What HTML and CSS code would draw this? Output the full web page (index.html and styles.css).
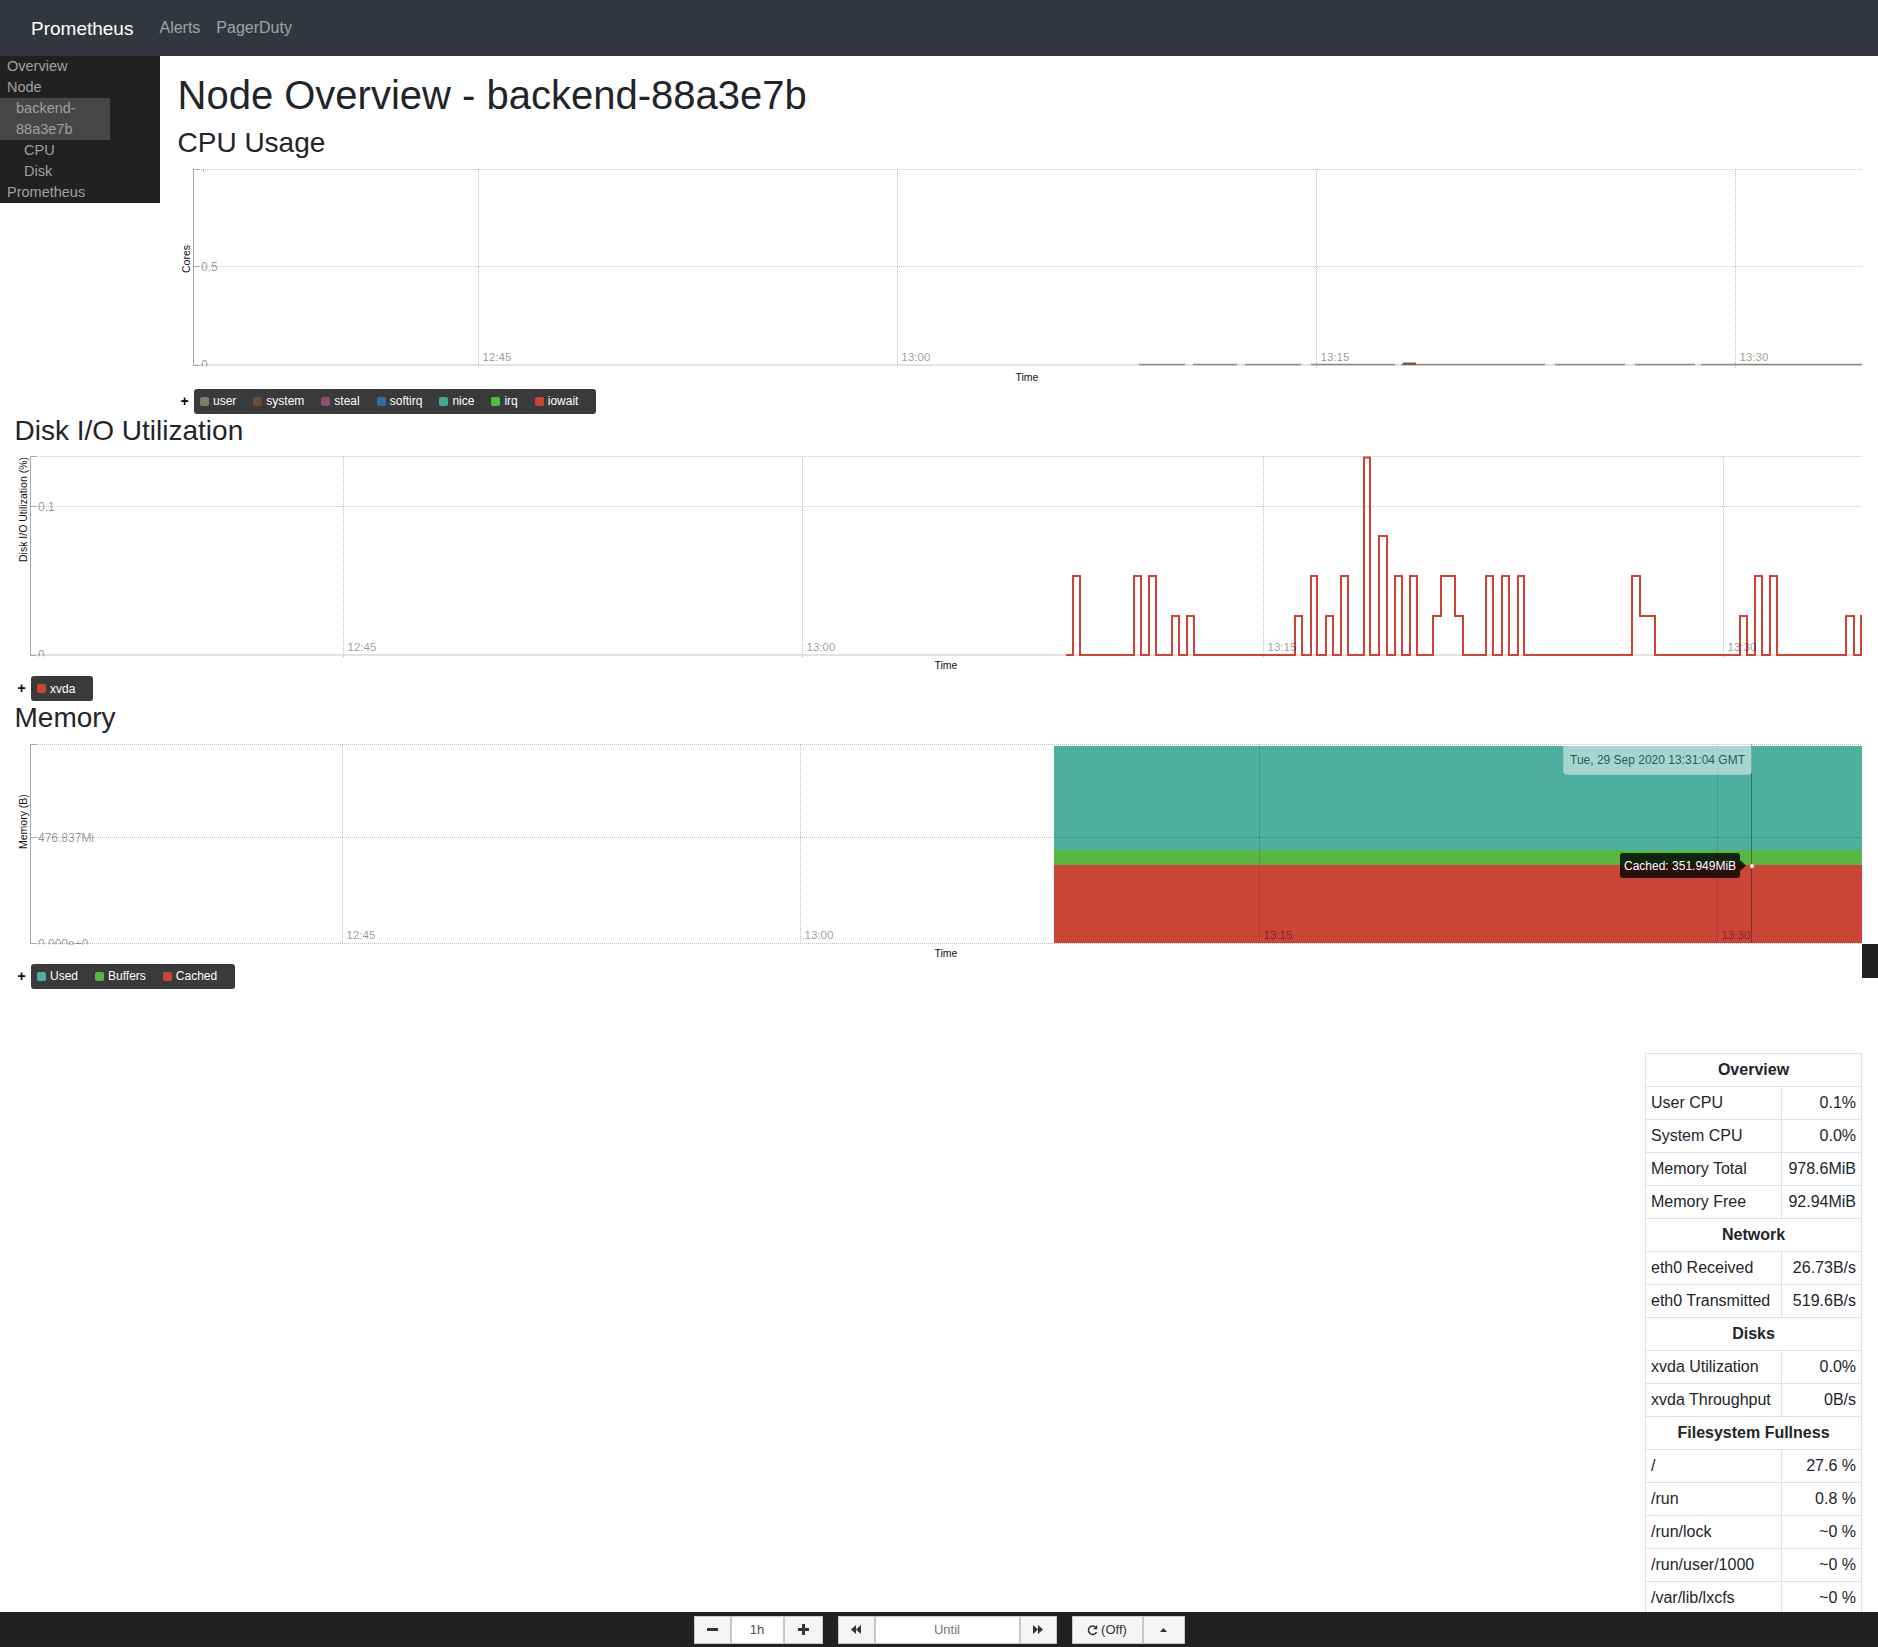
FILE: index.html
```html
<!DOCTYPE html>
<html lang="en">
<head>
<meta charset="utf-8">
<title>Node Overview - backend-88a3e7b</title>
<link rel="stylesheet" href="styles.css">
</head>
<body>
<nav class="navbar">
  <a class="brand">Prometheus</a>
  <a class="navlink">Alerts</a>
  <a class="navlink">PagerDuty</a>
</nav>

<div class="page">
  <div class="top">
    <aside class="sidebar">
      <a class="m1">Overview</a>
      <a class="m1">Node</a>
      <a class="m2">backend-88a3e7b</a>
      <a class="m3">CPU</a>
      <a class="m3">Disk</a>
      <a class="m1">Prometheus</a>
    </aside>
    <div class="content">
      <h1 class="title">Node Overview - backend-88a3e7b</h1>
      <h3 class="section">CPU Usage</h3>
      <div class="graph">
        <svg class="chart" width="1687" height="220" viewBox="0 0 1687 220">
          <defs><clipPath id="c1"><rect x="0" y="0" width="1687" height="197.5"/></clipPath></defs>
          <line class="grid" x1="18" y1="0.5" x2="1687" y2="0.5"/>
          <line class="grid" x1="18" y1="97.5" x2="1687" y2="97.5"/>
          <line class="base" x1="18" y1="196" x2="1687" y2="196"/>
          <line class="vgrid" x1="303.5" y1="0" x2="303.5" y2="199"/>
          <line class="vgrid" x1="722.5" y1="0" x2="722.5" y2="199"/>
          <line class="vgrid" x1="1141.5" y1="0" x2="1141.5" y2="199"/>
          <line class="vgrid" x1="1560.5" y1="0" x2="1560.5" y2="199"/>
          <path class="cpuline" d="M964 195.5 H1010 M1018 195.5 H1062 M1070 195.5 H1126 M1136 195.5 H1220 M1226 195.5 H1370 M1380 195.5 H1450 M1460 195.5 H1520 M1526 195.5 H1687"/>
          <rect x="1228" y="193.5" width="13" height="2.5" fill="#7a5a40"/>
          <path class="axis" d="M24.5 0.5 H18.5 V196.5 H24.5 M18.5 97.5 H24.5 M28.5 0 V3"/>
          <g clip-path="url(#c1)">
            <text class="ytick" x="26" y="97.5">0.5</text>
            <text class="ytick" x="26" y="196">0</text>
          </g>
          <text class="xtick" x="307.5" y="191.5">12:45</text>
          <text class="xtick" x="726.5" y="191.5">13:00</text>
          <text class="xtick" x="1145.5" y="191.5">13:15</text>
          <text class="xtick" x="1564.5" y="191.5">13:30</text>
          <text class="axtitle" x="852" y="212" text-anchor="middle">Time</text>
          <text class="axtitle" transform="translate(15 104) rotate(-90)">Cores</text>
        </svg>
      </div>
      <div class="legend-row">
        <span class="plus">+</span>
        <div class="legend">
          <span class="item"><i class="sw c-user"></i>user</span>
          <span class="item"><i class="sw c-system"></i>system</span>
          <span class="item"><i class="sw c-steal"></i>steal</span>
          <span class="item"><i class="sw c-softirq"></i>softirq</span>
          <span class="item"><i class="sw c-nice"></i>nice</span>
          <span class="item"><i class="sw c-irq"></i>irq</span>
          <span class="item"><i class="sw c-iowait"></i>iowait</span>
        </div>
      </div>
    </div>
  </div>

  <h3 class="section">Disk I/O Utilization</h3>
  <div class="graph">
    <svg class="chart" width="1850" height="220" viewBox="0 0 1850 220">
      <defs><clipPath id="c2"><rect x="0" y="0" width="1850" height="200.5"/></clipPath></defs>
      <line class="grid" x1="18" y1="0.5" x2="1850" y2="0.5"/>
      <line class="grid" x1="18" y1="50.5" x2="1850" y2="50.5"/>
      <line class="base" x1="18" y1="199" x2="1850" y2="199"/>
      <line class="vgrid" x1="331.5" y1="0" x2="331.5" y2="202"/>
      <line class="vgrid" x1="790.5" y1="0" x2="790.5" y2="202"/>
      <line class="vgrid" x1="1251.5" y1="0" x2="1251.5" y2="202"/>
      <line class="vgrid" x1="1711.5" y1="0" x2="1711.5" y2="202"/>
      <path class="diskline" d="M1054 199 H1061 V120 H1068 V199 H1122 V120 H1129 V199 H1137 V120 H1144 V199 H1160 V160 H1167 V199 H1175 V160 H1182 V199 H1283 V160 H1290 V199 H1299 V120 H1305 V199 H1314 V160 H1321 V199 H1329 V120 H1336 V199 H1352 V1.5 H1358 V199 H1367 V80 H1375 V199 H1383 V120 H1390 V199 H1398 V120 H1405 V199 H1421 V160 H1429 V120 H1443 V160 H1451 V199 H1474 V120 H1481 V199 H1490 V120 H1497 V199 H1506 V120 H1512 V199 H1620 V120 H1628 V160 H1643 V199 H1728 V160 H1735 V199 H1743 V120 H1750 V199 H1758 V120 H1765 V199 H1834 V160 H1842 V199 H1849 V160 H1850"/>
      <path class="axis" d="M24.5 0.5 H18.5 V199.5 H24.5 M18.5 50.5 H24.5"/>
      <g clip-path="url(#c2)">
        <text class="ytick" x="26" y="50.5">0.1</text>
        <text class="ytick" x="26" y="199">0</text>
      </g>
      <text class="xtick" x="335.5" y="194.5">12:45</text>
      <text class="xtick" x="794.5" y="194.5">13:00</text>
      <text class="xtick" x="1255.5" y="194.5">13:15</text>
      <text class="xtick" x="1715.5" y="194.5">13:30</text>
      <text class="axtitle" x="934" y="213" text-anchor="middle">Time</text>
      <text class="axtitle" transform="translate(15 106) rotate(-90)">Disk I/O Utilization (%)</text>
    </svg>
  </div>
  <div class="legend-row">
    <span class="plus">+</span>
    <div class="legend">
      <span class="item"><i class="sw c-iowait"></i>xvda</span>
    </div>
  </div>

  <h3 class="section">Memory</h3>
  <div class="graph">
    <svg class="chart" width="1850" height="220" viewBox="0 0 1850 220">
      <defs><clipPath id="c3"><rect x="0" y="0" width="1850" height="200.5"/></clipPath></defs>
      <rect x="1042" y="2" width="808" height="104" fill="#4caf9f"/>
      <rect x="1042" y="106" width="808" height="15" fill="#5ab642"/>
      <rect x="1042" y="121" width="808" height="78" fill="#cb4536"/>
      <line class="dgrid" x1="18" y1="0.5" x2="1850" y2="0.5"/>
      <line class="dgrid" x1="18" y1="93.5" x2="1850" y2="93.5"/>
      <line class="dgrid" x1="18" y1="199.5" x2="1850" y2="199.5"/>
      <line class="dgrid" x1="330.5" y1="0" x2="330.5" y2="200"/>
      <line class="dgrid" x1="788.5" y1="0" x2="788.5" y2="200"/>
      <line class="dgrid" x1="1247.5" y1="0" x2="1247.5" y2="200"/>
      <line class="dgrid" x1="1705.5" y1="0" x2="1705.5" y2="200"/>
      <path class="axis" d="M24.5 0.5 H18.5 V199.5 H24.5 M18.5 93.5 H24.5"/>
      <g clip-path="url(#c3)">
        <text class="ytick" x="26" y="93.5">476.837Mi</text>
        <text class="ytick" x="26" y="199.5">0.000e+0</text>
      </g>
      <text class="xtick" x="334.5" y="194.5">12:45</text>
      <text class="xtick" x="792.5" y="194.5">13:00</text>
      <text class="xtick" x="1251.5" y="194.5">13:15</text>
      <text class="xtick" x="1709.5" y="194.5">13:30</text>
      <line class="hover" x1="1739.5" y1="0" x2="1739.5" y2="199"/>
      <g class="xlabel">
        <rect x="1551.5" y="0.5" width="188" height="30" rx="3"/>
        <text x="1558" y="19.5">Tue, 29 Sep 2020 13:31:04 GMT</text>
      </g>
      <rect class="tipbox" x="1608" y="109" width="120" height="25" rx="3"/>
      <polygon class="tipbox" points="1728,116 1734,121.5 1728,127"/>
      <text class="tiptext" x="1612" y="126">Cached: 351.949MiB</text>
      <circle cx="1740" cy="122" r="2.5" fill="#fff" stroke="#cb4536" stroke-width="1"/>
      <text class="axtitle" x="934" y="213" text-anchor="middle">Time</text>
      <text class="axtitle" transform="translate(15 105) rotate(-90)">Memory (B)</text>
    </svg>
    <div class="edgeblock"></div>
  </div>
  <div class="legend-row">
    <span class="plus">+</span>
    <div class="legend">
      <span class="item"><i class="sw c-used"></i>Used</span>
      <span class="item"><i class="sw c-buffers"></i>Buffers</span>
      <span class="item"><i class="sw c-cached"></i>Cached</span>
    </div>
  </div>

  <table class="rhs">
    <colgroup><col class="col-k"><col class="col-v"></colgroup>
    <tr><th colspan="2">Overview</th></tr>
    <tr><td>User CPU</td><td class="v">0.1%</td></tr>
    <tr><td>System CPU</td><td class="v">0.0%</td></tr>
    <tr><td>Memory Total</td><td class="v">978.6MiB</td></tr>
    <tr><td>Memory Free</td><td class="v">92.94MiB</td></tr>
    <tr><th colspan="2">Network</th></tr>
    <tr><td>eth0 Received</td><td class="v">26.73B/s</td></tr>
    <tr><td>eth0 Transmitted</td><td class="v">519.6B/s</td></tr>
    <tr><th colspan="2">Disks</th></tr>
    <tr><td>xvda Utilization</td><td class="v">0.0%</td></tr>
    <tr><td>xvda Throughput</td><td class="v">0B/s</td></tr>
    <tr><th colspan="2">Filesystem Fullness</th></tr>
    <tr><td>/</td><td class="v">27.6 %</td></tr>
    <tr><td>/run</td><td class="v">0.8 %</td></tr>
    <tr><td>/run/lock</td><td class="v">~0 %</td></tr>
    <tr><td>/run/user/1000</td><td class="v">~0 %</td></tr>
    <tr><td>/var/lib/lxcfs</td><td class="v">~0 %</td></tr>
  </table>
</div>

<div class="timebar">
  <div class="grp">
    <span class="btn w37"><svg width="11" height="11" viewBox="0 0 11 11"><rect x="0" y="4" width="11" height="3" fill="#333"/></svg></span>
    <span class="inp w53">1h</span>
    <span class="btn w39"><svg width="11" height="11" viewBox="0 0 11 11"><rect x="0" y="4" width="11" height="3" fill="#333"/><rect x="4" y="0" width="3" height="11" fill="#333"/></svg></span>
  </div>
  <div class="grp">
    <span class="btn w37"><svg width="10" height="9" viewBox="0 0 10 9"><polygon points="5,0 5,9 0,4.5" fill="#333"/><polygon points="10,0 10,9 5,4.5" fill="#333"/></svg></span>
    <span class="inp w145 ph">Until</span>
    <span class="btn w37"><svg width="10" height="9" viewBox="0 0 10 9"><polygon points="0,0 0,9 5,4.5" fill="#333"/><polygon points="5,0 5,9 10,4.5" fill="#333"/></svg></span>
  </div>
  <div class="grp">
    <span class="btn w71"><svg class="ico" width="11" height="12" viewBox="0 0 12 12"><path d="M9.6 3.2 A4.6 4.6 0 1 0 10.4 8.2" fill="none" stroke="#333" stroke-width="1.7"/><polygon points="11.2,0.6 11.2,5.2 6.6,5.2" fill="#333"/></svg>(Off)</span>
    <span class="btn w42"><svg width="7" height="4" viewBox="0 0 7 4"><polygon points="0,4 3.5,0 7,4" fill="#333"/></svg></span>
  </div>
</div>
</body>
</html>
```
FILE: styles.css
```css
* { box-sizing: border-box; }
html, body { margin: 0; padding: 0; }
body {
  font-family: "Liberation Sans", Arial, Helvetica, sans-serif;
  font-size: 16px;
  line-height: 1.5;
  color: #212529;
  background: #fff;
}
a { text-decoration: none; }

/* top navbar */
.navbar {
  height: 56px;
  background: #33373d;
  display: flex;
  align-items: center;
  padding: 0 31px;
}
.brand {
  color: #fff;
  font-size: 19px;
  line-height: 1;
  margin-right: 18px;
}
.navlink {
  color: rgba(255, 255, 255, 0.55);
  font-size: 16px;
  padding: 0 8px;
}

/* page */
.page {
  padding: 0 16px 80px 12px;
}
.top {
  display: flex;
  align-items: flex-start;
  margin-left: -12px;
}
.sidebar {
  flex: none;
  width: 160px;
  background: #212121;
  display: flex;
  flex-direction: column;
  align-items: flex-start;
  font-size: 14.5px;
  line-height: 21px;
}
.sidebar a { color: #a0a0a0; display: block; }
.m1 { padding-left: 7px; }
.m2 { width: 110px; padding-left: 16px; background: #464646; }
.m3 { padding-left: 24px; }
.content {
  flex: 1;
  min-width: 0;
  margin-left: 15px;
}
.title {
  font-size: 40px;
  font-weight: 400;
  line-height: 48px;
  margin: 15px 0 7px;
  padding-left: 2.5px;
}
.section {
  font-size: 28px;
  font-weight: 400;
  line-height: 34.5px;
  margin: 0 0 8px;
  padding-left: 2.5px;
}

/* charts */
.graph {
  position: relative;
  height: 220px;
}
.chart { display: block; overflow: visible; }
.chart text { font-family: "Liberation Sans", Arial, Helvetica, sans-serif; }
.grid { stroke: #c8c8c8; stroke-width: 1; stroke-dasharray: 1 1; }
.vgrid { stroke: #bdbdbd; stroke-width: 1; stroke-dasharray: 1 1; }
.dgrid { stroke: rgba(0, 0, 0, 0.25); stroke-width: 1; stroke-dasharray: 1 1; }
.base { stroke: #e3e3e3; stroke-width: 2; }
.axis { fill: none; stroke: #a8a8a8; stroke-width: 1; }
.ytick { font-size: 12px; fill: #000; fill-opacity: 0.42; dominant-baseline: central; }
.xtick { font-size: 11.5px; fill: #000; fill-opacity: 0.42; }
.axtitle { font-size: 10.5px; fill: #111; }
.cpuline { fill: none; stroke: #8d8a78; stroke-width: 1.5; }
.diskline { fill: none; stroke: #cb4536; stroke-width: 2; }
.hover { stroke: rgba(0, 0, 0, 0.35); stroke-width: 1; }
.xlabel { opacity: 0.5; }
.xlabel rect { fill: #fff; stroke: #e0e0e0; }
.xlabel text { font-size: 12px; fill: #000; }
.tipbox { fill: rgba(0, 0, 0, 0.8); }
.tiptext { font-size: 12px; fill: #fff; }
.edgeblock {
  position: absolute;
  left: 100%;
  top: 200px;
  width: 16px;
  height: 34px;
  background: #222;
}

/* legends */
.legend-row {
  display: flex;
  align-items: center;
  height: 25px;
}
.plus {
  width: 19px;
  text-align: center;
  font-size: 14px;
  font-weight: bold;
  color: #000;
  line-height: 25px;
}
.legend {
  display: flex;
  align-items: center;
  height: 25px;
  padding: 0 1px 0 6px;
  background: #3a3a3a;
  border-radius: 3px;
  font-family: "Liberation Sans", Arial, Helvetica, sans-serif;
  font-size: 12px;
  color: #fff;
}
.item {
  display: flex;
  align-items: center;
  margin-right: 17px;
}
.sw {
  display: block;
  width: 9px;
  height: 9px;
  border-radius: 2px;
  margin-right: 4px;
}
.c-user { background: #7b7f6b; }
.c-system { background: #6b4c34; }
.c-steal { background: #8e4b73; }
.c-softirq { background: #2f6fa8; }
.c-nice { background: #4aa89a; }
.c-irq { background: #57b84a; }
.c-iowait { background: #cb4536; }
.c-used { background: #4caf9f; }
.c-buffers { background: #5ab642; }
.c-cached { background: #cb4536; }

/* right table */
.rhs {
  width: 216px;
  margin: 64px 0 0 auto;
  border-collapse: collapse;
  table-layout: fixed;
  font-size: 16px;
  line-height: 24px;
}
.col-k { width: 136px; }
.col-v { width: 80px; }
.rhs th, .rhs td {
  border: 1px solid #dee2e6;
  padding: 4px 5px;
  white-space: nowrap;
}
.rhs th { text-align: center; font-weight: bold; }
.rhs td.v { text-align: right; }

/* bottom time bar */
.timebar {
  position: fixed;
  left: 0;
  right: 0;
  bottom: 0;
  height: 35px;
  background: #212121;
  display: flex;
  justify-content: center;
  align-items: center;
  gap: 15px;
  z-index: 10;
}
.grp { display: flex; height: 28px; }
.btn, .inp {
  display: flex;
  align-items: center;
  justify-content: center;
  height: 28px;
  border: 1px solid #c8c8c8;
  font-size: 13px;
  color: #333;
}
.btn { background: #f5f5f5; }
.inp { background: #fff; color: #495057; }
.ph { color: #6c757d; }
.ico { margin-right: 3px; }
.w37 { width: 37px; }
.w39 { width: 39px; }
.w42 { width: 42px; }
.w53 { width: 53px; }
.w71 { width: 71px; }
.w145 { width: 145px; }
```
